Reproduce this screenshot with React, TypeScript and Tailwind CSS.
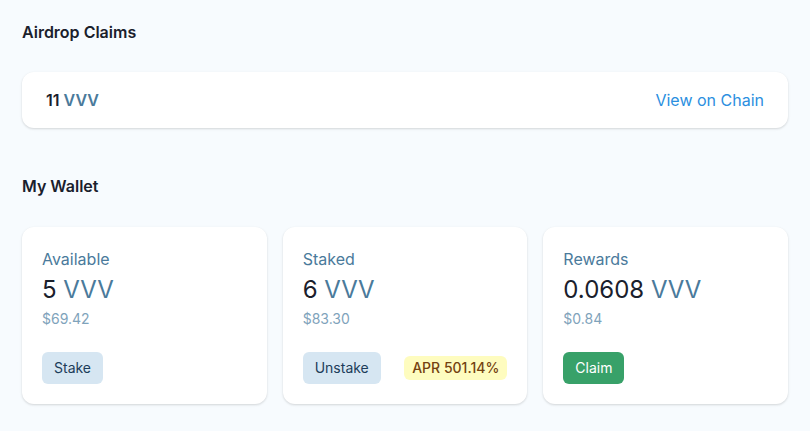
const wallet = [
  { label: "Available", amount: "5", usd: "$69.42", action: "Stake", kind: "light" },
  { label: "Staked", amount: "6", usd: "$83.30", action: "Unstake", kind: "light", apr: "APR 501.14%" },
  { label: "Rewards", amount: "0.0608", usd: "$0.84", action: "Claim", kind: "green" },
];

export default function App() {
  return (
    <div
      className="min-h-screen w-full bg-[#f7fbfe] px-[22px] pt-[22px] pb-6 text-[#1a202c]"
      style={{ fontFamily: "Inter, 'Noto Sans', sans-serif" }}
    >
      <h2 className="text-base font-semibold leading-[20px]">Airdrop Claims</h2>

      <div className="mt-[30px] flex h-[56px] items-center justify-between rounded-xl bg-white px-6 shadow-[0_1px_3px_rgba(0,0,0,0.1),0_1px_2px_rgba(0,0,0,0.06)]">
        <div className="text-base font-semibold">
          <span className="text-[#1a202c]">11</span> <span className="text-[#4a7a9b]">VVV</span>
        </div>
        <a className="text-base text-[#2b8fe0]">View on Chain</a>
      </div>

      <h2 className="mt-[48px] text-base font-semibold leading-[20px]">My Wallet</h2>

      <div className="mt-[31px] grid grid-cols-3 gap-4">
        {wallet.map((w) => (
          <div
            key={w.label}
            className="rounded-xl bg-white px-5 pt-[21px] pb-5 shadow-[0_1px_3px_rgba(0,0,0,0.1),0_1px_2px_rgba(0,0,0,0.06)]"
          >
            <div className="text-base leading-[22px] text-[#4a7a9b]">{w.label}</div>
            <div className="mt-[5px] text-2xl leading-[30px]">
              <span className="text-[#1a202c]">{w.amount}</span>{" "}
              <span className="text-[#4a7a9b]">VVV</span>
            </div>
            <div className="mt-1 text-sm leading-5 text-[#7fa3bb]">{w.usd}</div>
            <div className="mt-[23px] flex items-center justify-between">
              <button
                className={
                  w.kind === "green"
                    ? "h-8 rounded-md bg-[#38a169] px-3 text-sm text-white"
                    : "h-8 rounded-md bg-[#d6e6f2] px-3 text-sm text-[#1c3d5a]"
                }
              >
                {w.action}
              </button>
              {w.apr && (
                <span className="rounded-md bg-[#fefcbf] px-2 py-[2px] text-sm font-medium text-[#744210]">
                  {w.apr}
                </span>
              )}
            </div>
          </div>
        ))}
      </div>
    </div>
  );
}
